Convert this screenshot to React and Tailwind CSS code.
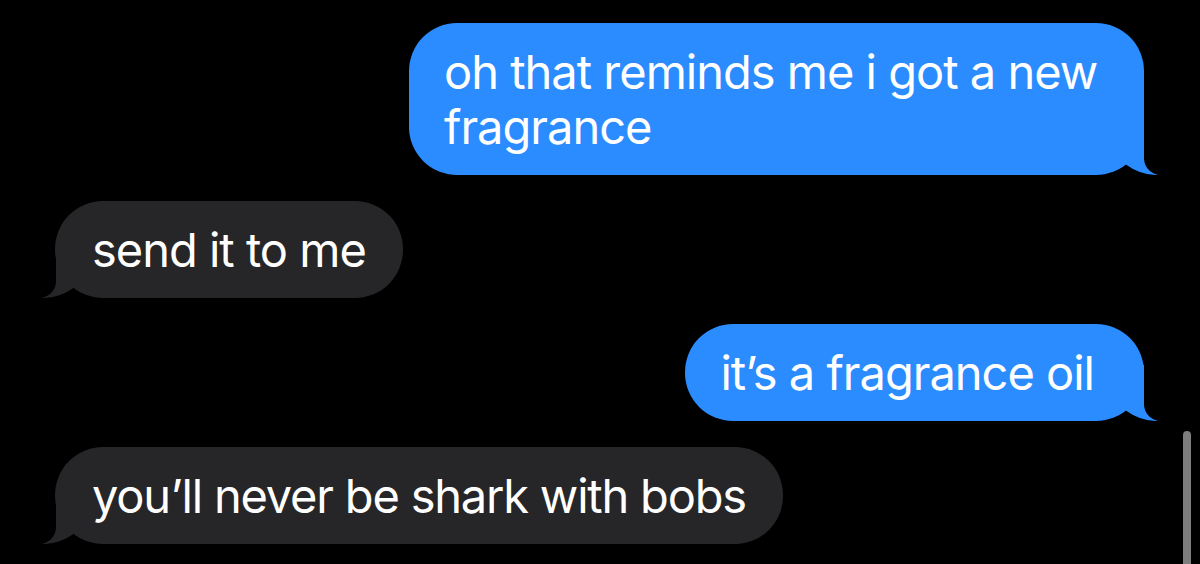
import React from "react";

const BLUE = "#2a8cff";
const GRAY = "#262628";

function TailRight({ color }) {
  return (
    <svg
      className="absolute right-[-15px] bottom-0"
      width="50"
      height="56"
      viewBox="0 0 50 56"
    >
      <path
        d="M35 0 L35 40 Q36 52 49 56 Q32 56.5 16 45 L0 30 L0 0 Z"
        fill={color}
      />
    </svg>
  );
}

function TailLeft({ color }) {
  return (
    <svg
      className="absolute left-[-14px] bottom-0"
      width="50"
      height="56"
      viewBox="0 0 50 56"
    >
      <path
        d="M15 0 L15 40 Q14 52 1 56 Q18 56.5 34 45 L50 30 L50 0 Z"
        fill={color}
      />
    </svg>
  );
}

function Sent({ children, className = "pr-[50px]" }) {
  return (
    <div className="flex justify-end pr-[56px]">
      <div
        className={`relative rounded-[48px] bg-[#2a8cff] pl-[35px] py-[21px] text-white text-[47px] leading-[55px] ${className}`}
      >
        <span className="relative z-10 whitespace-nowrap">{children}</span>
        <TailRight color={BLUE} />
      </div>
    </div>
  );
}

function Received({ children, className = "tracking-[-1px]" }) {
  return (
    <div className="flex justify-start pl-[55px]">
      <div
        className={`relative rounded-[48px] bg-[#262628] px-[37px] py-[21px] text-white text-[47px] leading-[55px] ${className}`}
      >
        <span className="relative z-10 whitespace-nowrap">{children}</span>
        <TailLeft color={GRAY} />
      </div>
    </div>
  );
}

export default function App() {
  return (
    <div
      className="relative w-[1200px] h-[564px] overflow-hidden bg-black flex flex-col gap-[26px] pt-[23px]"
      style={{ fontFamily: "Inter, 'Noto Sans', sans-serif" }}
    >
      <Sent className="w-[735px] pr-[30px] tracking-[-1px]">
        oh that reminds me i got a new
        <br />
        fragrance
      </Sent>
      <Received>send it to me</Received>
      <Sent className="pr-[50px] tracking-[-1px]">it’s a fragrance oil</Sent>
      <Received className="tracking-[-1.2px]">
        you’ll never be shark with bobs
      </Received>
      <div className="absolute left-[1183px] top-[431px] w-[8px] h-[140px] rounded-full bg-[#7d7d7d]" />
    </div>
  );
}
